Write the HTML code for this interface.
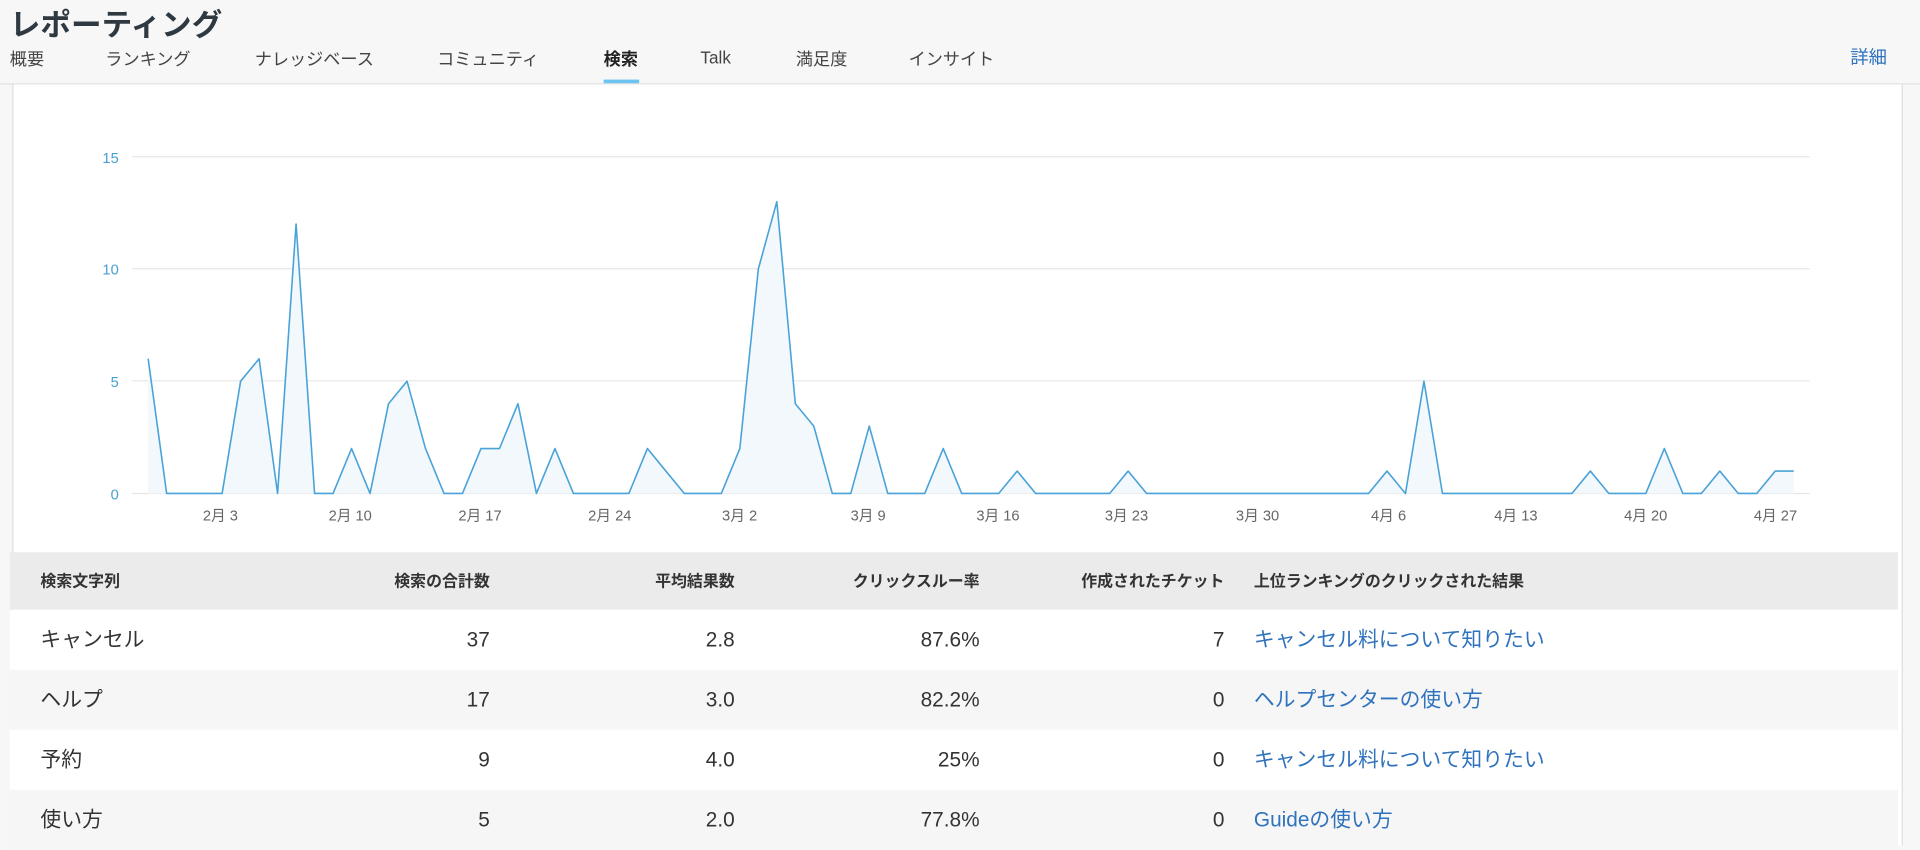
<!DOCTYPE html>
<html><head><meta charset="utf-8">
<style>
html,body{margin:0;padding:0;width:1920px;height:845px;overflow:hidden;background:#f7f7f7}
#s{position:absolute;left:0;top:0;width:1568px;height:690px;transform:scale(1.22449);transform-origin:0 0;font-family:"Liberation Sans","Noto Sans CJK JP",sans-serif;color:#333}
.hdr{position:absolute;left:0;top:0;width:1568px;height:68px;background:#f7f7f7;border-bottom:1px solid #e3e3e3}
.title{position:absolute;left:8px;top:1px;font-size:25px;font-weight:bold;color:#2f3941}
.tab{position:absolute;top:38px;height:20px;line-height:20px;font-size:14px;color:#444}
.card{position:absolute;left:10px;top:69px;width:1542px;height:621px;background:#fff;border-left:1px solid #ddd;border-right:1px solid #ddd}
.row{position:absolute;left:8px;width:1542px;height:49px;font-size:17px;color:#333}
.row div{position:absolute;top:0;line-height:49px}
.r{text-align:right}
.hd{font-size:13px;font-weight:bold;color:#333}
a{color:#2f72bd;text-decoration:none}
</style></head><body><div id="s">
<div class="hdr">
<div class="title">レポーティング</div>
<div class="tab" style="left:8px">概要</div>
<div class="tab" style="left:86px">ランキング</div>
<div class="tab" style="left:208px">ナレッジベース</div>
<div class="tab" style="left:357px">コミュニティ</div>
<div class="tab" style="left:493px;font-weight:bold;color:#222">検索</div>
<div style="position:absolute;left:493px;top:65px;width:29px;height:3px;background:#6cc4f0"></div>
<div class="tab" style="left:572px;top:37px">Talk</div>
<div class="tab" style="left:650px">満足度</div>
<div class="tab" style="left:742px">インサイト</div>
<div class="tab" style="left:1511px;top:38px;font-size:15px;color:#2f72bd">詳細</div>
</div>
<div class="card"></div>
<svg style="position:absolute;left:0;top:0" width="1568" height="450" viewBox="0 0 1568 450">
<g stroke="#e6e6e6" stroke-width="1">
<line x1="108" y1="128" x2="1478" y2="128"/><line x1="108" y1="219.5" x2="1478" y2="219.5"/><line x1="108" y1="311" x2="1478" y2="311"/><line x1="108" y1="403" x2="1478" y2="403"/>
</g>
<g font-size="12" fill="#4a9fd0" text-anchor="end" font-family="Liberation Sans,sans-serif">
<text x="97" y="133">15</text><text x="97" y="224">10</text><text x="97" y="316">5</text><text x="97" y="408">0</text>
</g>
<g font-size="12" fill="#666" text-anchor="middle" font-family="Liberation Sans,Noto Sans CJK JP,sans-serif">
<text x="180" y="425">2月 3</text><text x="286" y="425">2月 10</text><text x="392" y="425">2月 17</text><text x="498" y="425">2月 24</text><text x="604" y="425">3月 2</text><text x="709" y="425">3月 9</text><text x="815" y="425">3月 16</text><text x="920" y="425">3月 23</text><text x="1027" y="425">3月 30</text><text x="1134" y="425">4月 6</text><text x="1238" y="425">4月 13</text><text x="1344" y="425">4月 20</text><text x="1450" y="425">4月 27</text>
</g>
<polygon fill="#f2f8fc" points="121,403 121,293 136.1,403 181.4,403 196.5,311.3 211.6,293 226.7,403 241.8,183 256.9,403 272,403 287.1,366.3 302.2,403 317.3,329.7 332.4,311.3 347.5,366.3 362.6,403 377.7,403 392.8,366.3 407.9,366.3 423,329.7 438.1,403 453.2,366.3 468.3,403 513.6,403 528.7,366.3 543.8,384.7 558.9,403 589.1,403 604.2,366.3 619.3,219.7 634.4,164.7 649.5,329.7 664.6,348 679.7,403 694.8,403 709.9,348 725,403 755.2,403 770.3,366.3 785.4,403 815.6,403 830.7,384.7 845.8,403 906.2,403 921.3,384.7 936.4,403 1117.6,403 1132.7,384.7 1147.8,403 1162.9,311.3 1178,403 1283.7,403 1298.8,384.7 1313.9,403 1344.1,403 1359.2,366.3 1374.3,403 1389.4,403 1404.5,384.7 1419.6,403 1434.7,403 1449.8,384.7 1464.9,384.7 1464.9,403"/>
<polyline fill="none" stroke="#4aa3d8" stroke-width="1.3" stroke-linejoin="round" points="121,293 136.1,403 181.4,403 196.5,311.3 211.6,293 226.7,403 241.8,183 256.9,403 272,403 287.1,366.3 302.2,403 317.3,329.7 332.4,311.3 347.5,366.3 362.6,403 377.7,403 392.8,366.3 407.9,366.3 423,329.7 438.1,403 453.2,366.3 468.3,403 513.6,403 528.7,366.3 543.8,384.7 558.9,403 589.1,403 604.2,366.3 619.3,219.7 634.4,164.7 649.5,329.7 664.6,348 679.7,403 694.8,403 709.9,348 725,403 755.2,403 770.3,366.3 785.4,403 815.6,403 830.7,384.7 845.8,403 906.2,403 921.3,384.7 936.4,403 1117.6,403 1132.7,384.7 1147.8,403 1162.9,311.3 1178,403 1283.7,403 1298.8,384.7 1313.9,403 1344.1,403 1359.2,366.3 1374.3,403 1389.4,403 1404.5,384.7 1419.6,403 1434.7,403 1449.8,384.7 1464.9,384.7"/>
</svg>
<div class="row hd" style="top:451px;height:47px;background:#ebebeb">
<div style="left:25px;line-height:47px">検索文字列</div>
<div class="r" style="right:1150px;line-height:47px">検索の合計数</div>
<div class="r" style="right:950px;line-height:47px">平均結果数</div>
<div class="r" style="right:750px;line-height:47px">クリックスルー率</div>
<div class="r" style="right:550px;line-height:47px">作成されたチケット</div>
<div style="left:1016px;line-height:47px">上位ランキングのクリックされた結果</div>
</div>
<div class="row" style="top:498px;background:#fff"><div style="left:25px">キャンセル</div><div class="r" style="right:1150px">37</div><div class="r" style="right:950px">2.8</div><div class="r" style="right:750px">87.6%</div><div class="r" style="right:550px">7</div><div style="left:1016px"><a>キャンセル料について知りたい</a></div></div>
<div class="row" style="top:547px;background:#f6f6f6"><div style="left:25px">ヘルプ</div><div class="r" style="right:1150px">17</div><div class="r" style="right:950px">3.0</div><div class="r" style="right:750px">82.2%</div><div class="r" style="right:550px">0</div><div style="left:1016px"><a>ヘルプセンターの使い方</a></div></div>
<div class="row" style="top:596px;background:#fff"><div style="left:25px">予約</div><div class="r" style="right:1150px">9</div><div class="r" style="right:950px">4.0</div><div class="r" style="right:750px">25%</div><div class="r" style="right:550px">0</div><div style="left:1016px"><a>キャンセル料について知りたい</a></div></div>
<div class="row" style="top:645px;background:#f6f6f6"><div style="left:25px">使い方</div><div class="r" style="right:1150px">5</div><div class="r" style="right:950px">2.0</div><div class="r" style="right:750px">77.8%</div><div class="r" style="right:550px">0</div><div style="left:1016px"><a>Guideの使い方</a></div></div>
</div></body></html>
